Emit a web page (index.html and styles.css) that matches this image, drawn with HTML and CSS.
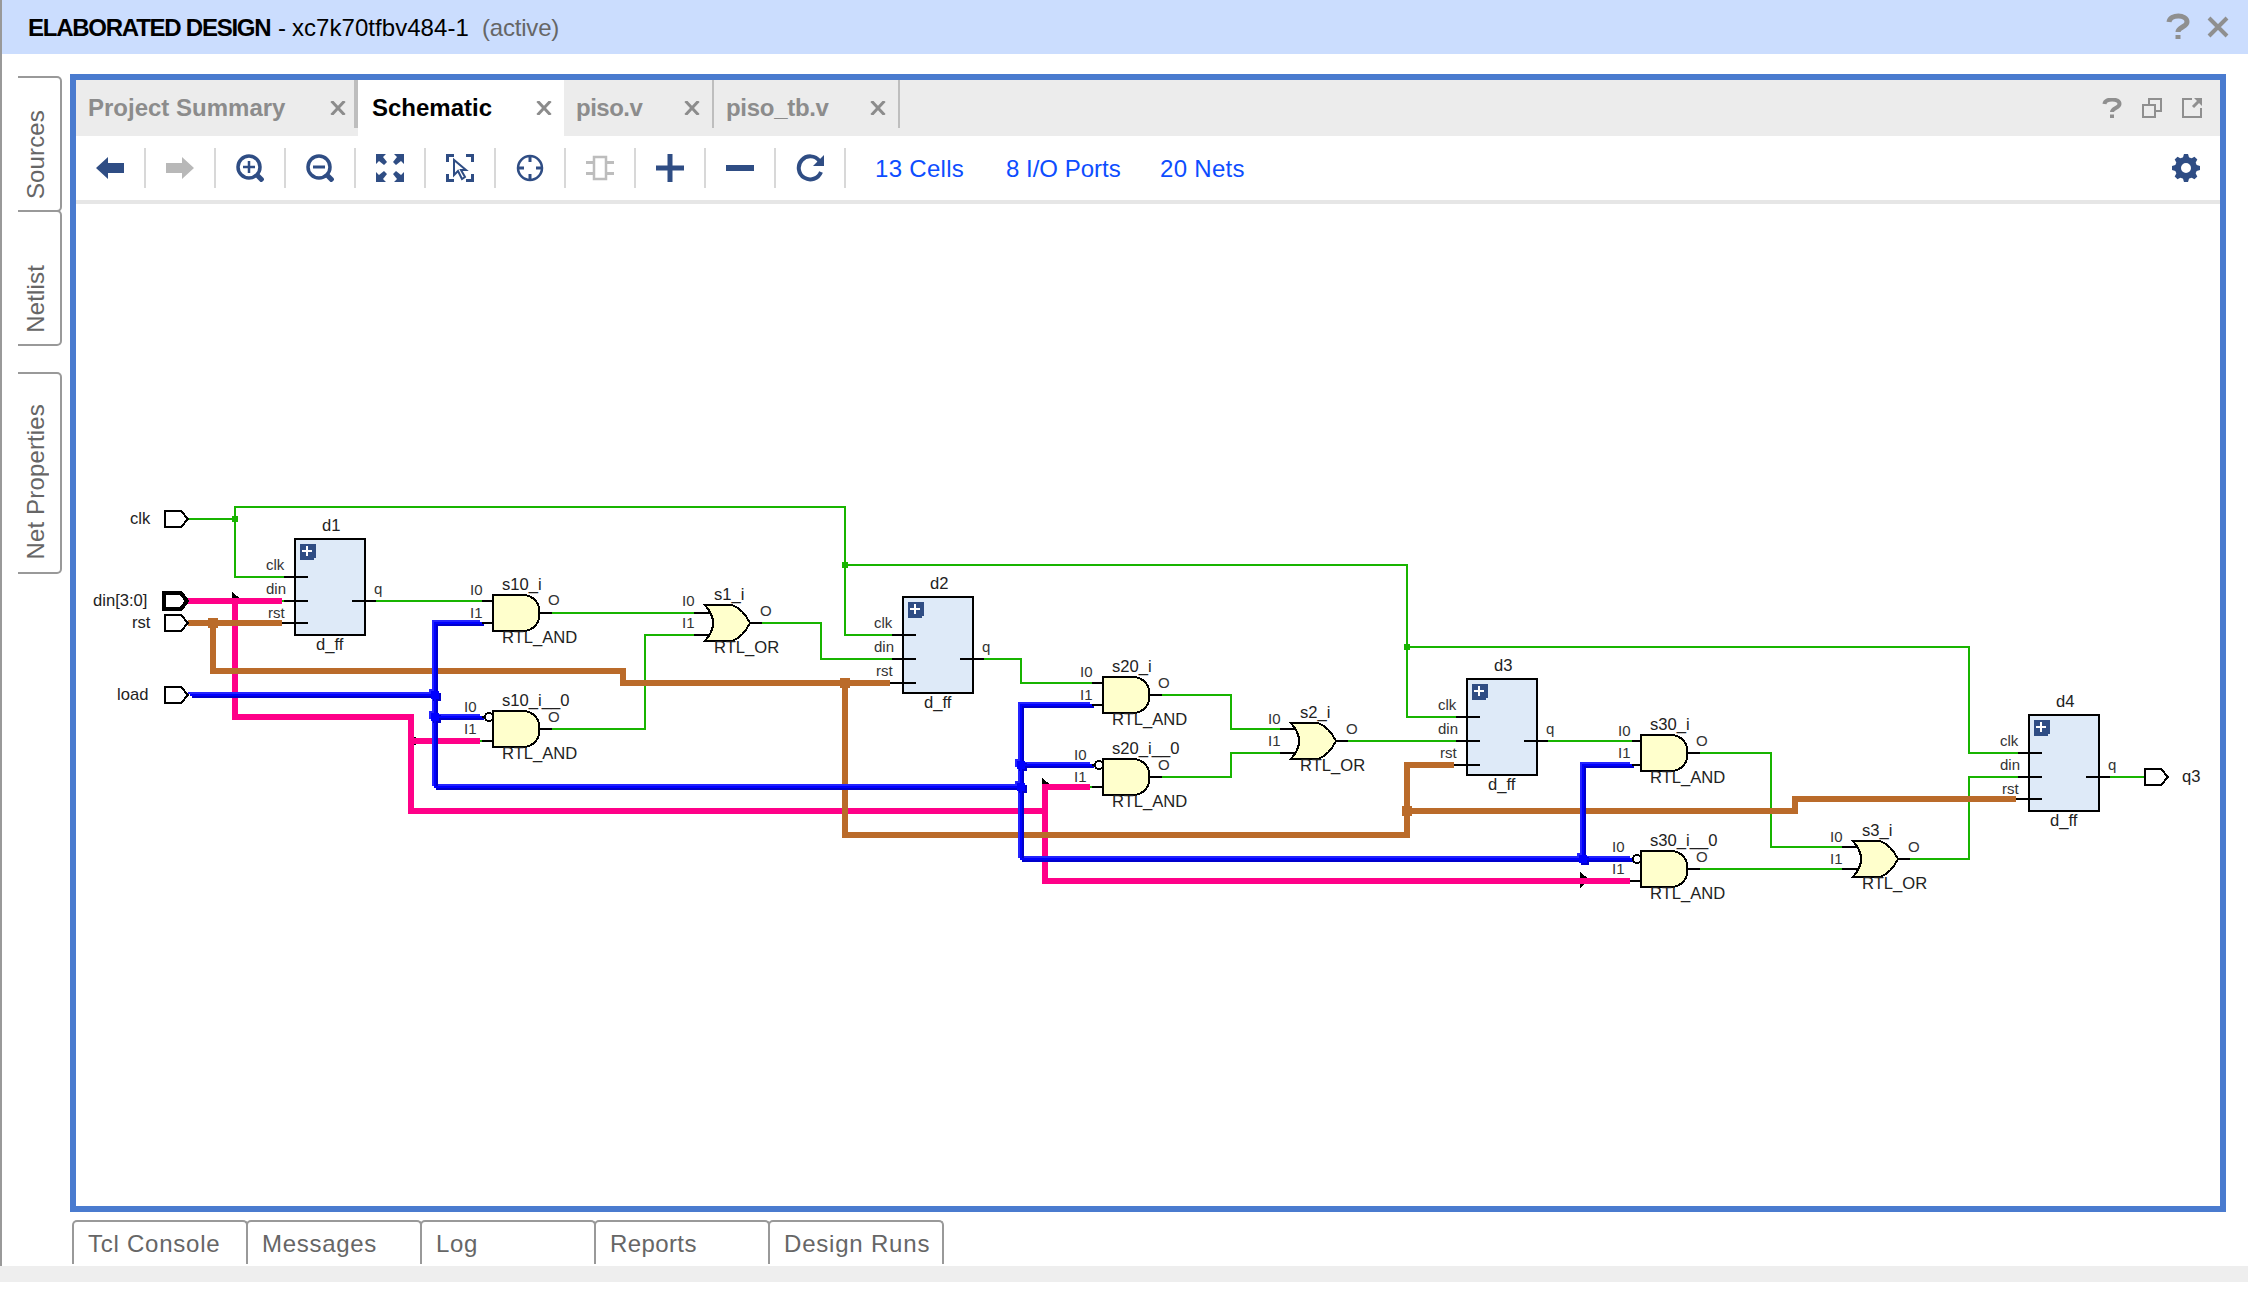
FILE: index.html
```html
<!DOCTYPE html>
<html lang="en">
<head>
<meta charset="utf-8">
<title>Elaborated Design - Schematic</title>
<link rel="stylesheet" href="styles.css">
</head>
<body>
<div class="window">
  <header class="titlebar">
    <strong class="design">ELABORATED DESIGN</strong>
    <span class="dash">-</span>
    <span class="part">xc7k70tfbv484-1</span>
    <span class="state">(active)</span>
    <svg class="title-icons" viewBox="0 0 64 28" fill="none" stroke="#8f8f8f" stroke-width="4">
      <path d="M3 9C4 1 21 1 21 9C21 14 12 14 12 19M12 22v4" stroke-width="5"/>
      <path d="M43 5l18 18M61 5L43 23"/>
    </svg>
  </header>

  <div class="workspace">
    <nav class="side">
      <div class="side-tab joined"><span>Sources</span></div>
      <div class="side-tab"><span>Netlist</span></div>
      <div class="side-tab props"><span>Net Properties</span></div>
    </nav>

    <main class="panel">
      <div class="tabs">
        <div class="tab t-summary"><span>Project Summary</span><svg viewBox="0 0 16 14"><path d="M1.500 0l13 14M14.500 0l-13 14"/></svg></div>
        <div class="tab t-schematic active"><span>Schematic</span><svg viewBox="0 0 16 14"><path d="M1.500 0l13 14M14.500 0l-13 14"/></svg></div>
        <div class="tab t-piso"><span>piso.v</span><svg viewBox="0 0 16 14"><path d="M1.500 0l13 14M14.500 0l-13 14"/></svg></div>
        <div class="tab t-tb"><span>piso_tb.v</span><svg viewBox="0 0 16 14"><path d="M1.500 0l13 14M14.500 0l-13 14"/></svg></div>
        <svg class="panel-icons" viewBox="0 0 100 20" fill="none" stroke="#8f8f8f" stroke-width="2">
          <path d="M2.500 6C3 0 17.500 0 17.500 6C17.500 10 10 10 10 14M10 16.500v3.500" stroke-width="4"/>
          <path d="M47 7V1h12v12h-6M41 7h12v12H41z"/>
          <path d="M90 1h-9v18h18v-9"/>
          <path d="M91 9l6-6" stroke-width="3"/>
          <path d="M92 0h8v8z" fill="#8f8f8f" stroke="none"/>
        </svg>
      </div>

      <div class="toolbar">
        <div class="tool"><svg viewBox="0 0 28 28"><path class="fill" d="M0 14L12 3v6h16v10H12v6z"/></svg></div>
        <div class="tool"><svg viewBox="0 0 28 28"><path fill="#b8b8b8" d="M28 14L16 3v6H0v10h16v6z"/></svg></div>
        <div class="tool"><svg viewBox="0 0 28 28"><circle class="line" cx="13" cy="13" r="11" stroke-width="3.500"/><path class="line" d="M13 7v12M7 13h12" stroke-width="2.500"/><path class="line" d="M20 20l7 7" stroke-width="5"/></svg></div>
        <div class="tool"><svg viewBox="0 0 28 28"><circle class="line" cx="13" cy="13" r="11" stroke-width="3.500"/><path class="line" d="M7 13h12" stroke-width="3"/><path class="line" d="M20 20l7 7" stroke-width="5"/></svg></div>
        <div class="tool"><svg viewBox="0 0 28 28"><path class="fill" d="M0 0h10L7 3l4 5-3 3-5-4-3 3zM28 0H18l3 3-4 5 3 3 5-4 3 3zM0 28h10l-3-3 4-5-3-3-5 4-3-3zM28 28H18l3-3-4-5 3-3 5 4 3-3z"/></svg></div>
        <div class="tool"><svg viewBox="0 0 28 28"><path class="line" d="M1.500 8V1.500H8M20 1.500h6.500V8M26.500 20v6.500H20M8 26.500H1.500V20" stroke-width="3"/><path class="line" d="M8 6v15l4-4 4 8 3-2-4-7h5z" stroke-width="2"/></svg></div>
        <div class="tool"><svg viewBox="0 0 28 28"><circle class="line" cx="14" cy="14" r="12" stroke-width="2.500"/><path class="line" d="M14 1v7M14 20v7M1 14h7M20 14h7" stroke-width="3"/></svg></div>
        <div class="tool"><svg viewBox="0 0 28 28" fill="none" stroke="#bdbdbd"><path d="M8 3h12v22H8z" stroke-width="2.500"/><path d="M0 8.500h8M0 19.500h8M20 8.500h8M20 19.500h8" stroke-width="3"/></svg></div>
        <div class="tool"><svg viewBox="0 0 28 28"><path class="fill" d="M11.500 0h5v11.500H28v5H16.500V28h-5V16.500H0v-5h11.500z"/></svg></div>
        <div class="tool"><svg viewBox="0 0 28 28"><path class="fill" d="M0 11h28v6H0z"/></svg></div>
        <div class="tool"><svg viewBox="0 0 28 28"><path class="line" d="M23.500 7A11.500 11.500 0 1 0 25 18" stroke-width="4"/><path class="fill" d="M28 1v11H17z"/></svg></div>
        <div class="counts"><a class="c1">13 Cells</a><a class="c2">8 I/O Ports</a><a class="c3">20 Nets</a></div>
        <svg class="gear" viewBox="-14 -14 28 28">
          <g class="fill"><path id="tooth" d="M-3.500-9L-2-14H2L3.500-9z"/><use href="#tooth" transform="rotate(45)"/><use href="#tooth" transform="rotate(90)"/><use href="#tooth" transform="rotate(135)"/><use href="#tooth" transform="rotate(180)"/><use href="#tooth" transform="rotate(225)"/><use href="#tooth" transform="rotate(270)"/><use href="#tooth" transform="rotate(315)"/></g>
          <circle class="line" r="8" stroke-width="6"/>
        </svg>
      </div>

      <svg class="schematic" viewBox="76 204 2144 1002">
        <defs>
          <g id="and">
            <path class="gate" d="M1 1H33C41 2 47 9 47 15V23C47 29 41 36 33 37H1z"/>
            <path class="pin" d="M48 19H60"/>
          </g>
          <g id="or">
            <path class="gate" d="M1 1H28Q39 5 46 19Q39 33 28 37H1Q17 19 1 1z"/>
            <path class="pin" d="M46 19H58"/>
          </g>
          <g id="ff">
            <path class="block" d="M1 1H71V97H1z"/>
            <path d="M6 6H22V20H20V22H6z" fill="#2f4d84"/>
            <path d="M13 8V18M8 13H18" stroke="#fff" stroke-width="2"/>
            <path class="pin" d="M-10 39H14M-10 63H14M58 63H82"/>
          </g>
          <path id="port" class="port" d="M1-8H17L24 0L17 8H1z"/>
          <path id="flow" d="M0-8L10 0L0 8z"/>
          <g id="load-net">
            <path d="M190 695H435M482 623H435V787H1021M435 717H482M1092 705H1021V859H1632M1021 765H1092M1632 765H1583V859"/>
            <path d="M431 695h8M431 717h8M1017 765h8M1017 787h8M1579 859h8" stroke-width="8"/>
          </g>
        </defs>

        <g class="net clk">
          <path d="M188 519H235M284 577H235V507H845V635H892M845 565H1407V717H1456M1407 647H1969V753H2018"/>
          <path d="M376 601H482M552 613H694M552 729H645V635H694M762 623H821V659H892M984 659H1021V683H1092M1160 695H1231V729H1280M1160 777H1231V753H1280M1348 741H1456M1548 741H1632M1700 753H1771V847H1842M1700 869H1842M1910 859H1969V777H2018M2110 777H2144"/>
          <path d="M282 601H284M480 741H482M1090 787H1092M1630 881H1632"/>
          <path d="M232 519h6M842 565h6M1404 647h6" stroke-width="6"/>
        </g>
        <use href="#flow" x="232" y="600"/><use href="#flow" x="410" y="741"/><use href="#flow" x="1042" y="786"/><use href="#flow" x="1580" y="880"/>
        <path class="net din" d="M188 601H282M235 601V717H411V811H1045M411 741H480M1090 787H1045V881H1630"/>
        <path class="net rst" d="M188 623H282M213 623V671H623V683H890M845 683V835H1407V765H1454M1407 811H1795V799H2016"/>
        <path class="net rst node" d="M208 623h10M840 683h10M1402 811h10"/>
        <use href="#load-net" class="net load hi" x="-2" y="-2"/>
        <use href="#load-net" class="net load lo" x="2" y="2"/>
        <use href="#load-net" class="net load"/>

        <g>
          <use href="#port" x="164" y="519"/>
          <path class="port bus" d="M164 593H181L187 601L181 609H164z"/>
          <use href="#port" x="164" y="623"/><use href="#port" x="164" y="695"/><use href="#port" x="2144" y="777"/>
        </g>

        <g>
          <use href="#ff" x="294" y="538"/><use href="#ff" x="902" y="596"/><use href="#ff" x="1466" y="678"/><use href="#ff" x="2028" y="714"/>
          <path class="pin" d="M282 623H308M890 683H916M1454 765H1480M2016 799H2042"/>
          <path class="pin" d="M482 601H492M482 623H492M482 717H485M482 741H492M1092 683H1102M1092 705H1102M1092 765H1095M1092 787H1102M1632 741H1640M1632 765H1640M1630 881H1640"/>
          <path class="pin" d="M694 613H710M694 635H710M1280 729H1296M1280 753H1296M1842 847H1858M1842 869H1858"/>
          <g class="bubble"><circle cx="489" cy="717" r="4"/><circle cx="1099" cy="765" r="4"/><circle cx="1637" cy="859" r="4"/></g>
          <use href="#and" x="492" y="594"/><use href="#and" x="492" y="710"/><use href="#and" x="1102" y="676"/><use href="#and" x="1102" y="758"/><use href="#and" x="1640" y="734"/><use href="#and" x="1640" y="850"/>
          <use href="#or" x="704" y="604"/><use href="#or" x="1290" y="722"/><use href="#or" x="1852" y="840"/>
        </g>

        <g class="name">
          <text x="130" y="524">clk</text><text x="93" y="606">din[3:0]</text><text x="132" y="628">rst</text><text x="117" y="700">load</text><text x="2182" y="782">q3</text>
          <text x="322" y="531">d1</text><text x="316" y="650">d_ff</text>
          <text x="930" y="589">d2</text><text x="924" y="708">d_ff</text>
          <text x="1494" y="671">d3</text><text x="1488" y="790">d_ff</text>
          <text x="2056" y="707">d4</text><text x="2050" y="826">d_ff</text>
          <text x="502" y="590">s10_i</text><text x="502" y="643">RTL_AND</text>
          <text x="502" y="706">s10_i__0</text><text x="502" y="759">RTL_AND</text>
          <text x="1112" y="672">s20_i</text><text x="1112" y="725">RTL_AND</text>
          <text x="1112" y="754">s20_i__0</text><text x="1112" y="807">RTL_AND</text>
          <text x="1650" y="730">s30_i</text><text x="1650" y="783">RTL_AND</text>
          <text x="1650" y="846">s30_i__0</text><text x="1650" y="899">RTL_AND</text>
          <text x="714" y="600">s1_i</text><text x="714" y="653">RTL_OR</text>
          <text x="1300" y="718">s2_i</text><text x="1300" y="771">RTL_OR</text>
          <text x="1862" y="836">s3_i</text><text x="1862" y="889">RTL_OR</text>
        </g>
        <g class="pin-name">
          <text x="266" y="570">clk</text><text x="266" y="594">din</text><text x="268" y="618">rst</text><text x="374" y="594">q</text>
          <text x="874" y="628">clk</text><text x="874" y="652">din</text><text x="876" y="676">rst</text><text x="982" y="652">q</text>
          <text x="1438" y="710">clk</text><text x="1438" y="734">din</text><text x="1440" y="758">rst</text><text x="1546" y="734">q</text>
          <text x="2000" y="746">clk</text><text x="2000" y="770">din</text><text x="2002" y="794">rst</text><text x="2108" y="770">q</text>
          <text x="470" y="595">I0</text><text x="470" y="618">I1</text><text x="548" y="605">O</text>
          <text x="464" y="712">I0</text><text x="464" y="734">I1</text><text x="548" y="722">O</text>
          <text x="1080" y="677">I0</text><text x="1080" y="700">I1</text><text x="1158" y="688">O</text>
          <text x="1074" y="760">I0</text><text x="1074" y="782">I1</text><text x="1158" y="770">O</text>
          <text x="1618" y="736">I0</text><text x="1618" y="758">I1</text><text x="1696" y="746">O</text>
          <text x="1612" y="852">I0</text><text x="1612" y="874">I1</text><text x="1696" y="862">O</text>
          <text x="682" y="606">I0</text><text x="682" y="628">I1</text><text x="760" y="616">O</text>
          <text x="1268" y="724">I0</text><text x="1268" y="746">I1</text><text x="1346" y="734">O</text>
          <text x="1830" y="842">I0</text><text x="1830" y="864">I1</text><text x="1908" y="852">O</text>
        </g>
      </svg>
    </main>
  </div>

  <nav class="bottom">
    <div class="bottom-tab b1">Tcl Console</div>
    <div class="bottom-tab b2">Messages</div>
    <div class="bottom-tab b3">Log</div>
    <div class="bottom-tab b4">Reports</div>
    <div class="bottom-tab b5">Design Runs</div>
  </nav>
</div>
<footer class="status"></footer>
</body>
</html>
```
FILE: styles.css
```css
* { box-sizing: border-box; }
body {
  margin: 0;
  background: #fff;
  font: 24px/28px "Liberation Sans", Arial, sans-serif;
  color: #666;
}
.window {
  height: 1266px;
  border-left: 2px solid #999;
  display: flex;
  flex-direction: column;
}
.titlebar {
  height: 54px;
  padding: 2px 18px 0 26px;
  background: #cbddfe;
  display: flex;
  align-items: center;
  white-space: nowrap;
  color: #000;
}
.design { width: 250px; letter-spacing: -1.25px; }
.dash { width: 14px; }
.part { width: 190px; letter-spacing: 0.05px; }
.state { color: #666; letter-spacing: -0.2px; }
.title-icons { width: 64px; height: 28px; margin: -2px 0 0 auto; }

.workspace {
  height: 1158px;
  padding: 20px 22px 0 16px;
  display: flex;
}
.side { width: 44px; margin-right: 8px; padding-top: 2px; }
.side-tab {
  height: 136px;
  border: 2px solid #999;
  border-left: 0;
  border-radius: 0 5px 5px 0;
  padding: 0 0 11px 2px;
  display: flex;
  align-items: flex-end;
}
.side-tab span {
  writing-mode: vertical-rl;
  transform: rotate(180deg);
  line-height: 32px;
  white-space: nowrap;
  letter-spacing: 0.15px;
}
.side-tab.joined { margin-bottom: -2px; }
.side-tab.props { height: 202px; margin-top: 26px; padding-bottom: 13px; }

.panel {
  width: 2156px;
  height: 1138px;
  border: 6px solid #4a7bcf;
  display: flex;
  flex-direction: column;
}
.tabs {
  height: 56px;
  background: #ececec;
  display: flex;
  font-weight: bold;
  color: #8c8c8c;
}
.tab {
  height: 48px;
  border-right: 2px solid #bebebe;
  display: flex;
  align-items: center;
  justify-content: space-between;
  padding: 8px 10px 0 12px;
  white-space: nowrap;
}
.tab svg {
  width: 16px;
  height: 14px;
  fill: none;
  stroke: #8c8c8c;
  stroke-width: 3;
}
.t-summary { width: 282px; border-right-width: 4px; padding-right: 8px; }
.t-schematic { width: 206px; }
.tab.active { height: 56px; padding: 8px 12px 8px 14px; background: #fff; color: #000; border: 0; }
.t-piso { width: 150px; padding-right: 12px; letter-spacing: -0.5px; }
.t-tb { width: 186px; padding-right: 12px; letter-spacing: -0.3px; }
.panel-icons { width: 100px; height: 20px; margin: 18px 18px 0 auto; }

.toolbar {
  height: 68px;
  border-bottom: 4px solid #e6e6e6;
  display: flex;
  align-items: center;
}
.tool {
  width: 70px;
  height: 40px;
  border-right: 2px solid #d8d8d8;
  display: flex;
  align-items: center;
  justify-content: center;
}
.tool svg { width: 28px; height: 28px; }
.fill { fill: #2f4d84; }
.line { fill: none; stroke: #2f4d84; }
.counts { display: flex; padding: 2px 0 0 29px; color: #0d4dff; white-space: nowrap; }
.c1 { width: 131px; letter-spacing: 0.3px; }
.c2 { width: 154px; }
.c3 { letter-spacing: 0.3px; }
.gear { width: 28px; height: 28px; margin-left: auto; margin-right: 20px; }

.schematic { width: 2144px; height: 1002px; display: block; shape-rendering: crispEdges; }
.net { fill: none; stroke-width: 6; }
.clk { stroke: #18b400; stroke-width: 2; }
.din { stroke: #ff0088; }
.rst { stroke: #ba6b2a; }
.rst.node { stroke-width: 10; }
.load { stroke: #0000ff; stroke-width: 2; }
.load.hi { stroke: #2424ff; }
.load.lo { stroke: #0000cc; }
.pin { fill: none; stroke: #000; stroke-width: 2; }
.gate { fill: #ffffcc; stroke: #000; stroke-width: 2; }
.block { fill: #deeaf8; stroke: #000; stroke-width: 2; }
.port { fill: #fff; stroke: #000; stroke-width: 2; }
.bus { stroke-width: 4; }
.bubble { fill: #fff; stroke: #000; stroke-width: 2; }
.name { font-size: 16.6px; fill: #222; }
.pin-name { font-size: 15px; fill: #333; }

.bottom { display: flex; padding: 8px 0 0 70px; }
.bottom-tab {
  width: 176px;
  height: 44px;
  margin-right: -2px;
  border: 2px solid #999;
  border-bottom: 0;
  border-radius: 5px 5px 0 0;
  padding: 8px 0 0 14px;
  white-space: nowrap;
}
.b1 { letter-spacing: 0.75px; }
.b2 { letter-spacing: 0.7px; }
.b3 { letter-spacing: 0.7px; }
.b4 { letter-spacing: 0.4px; }
.b5 { letter-spacing: 0.8px; }
.status { height: 16px; background: #eee; }
```
